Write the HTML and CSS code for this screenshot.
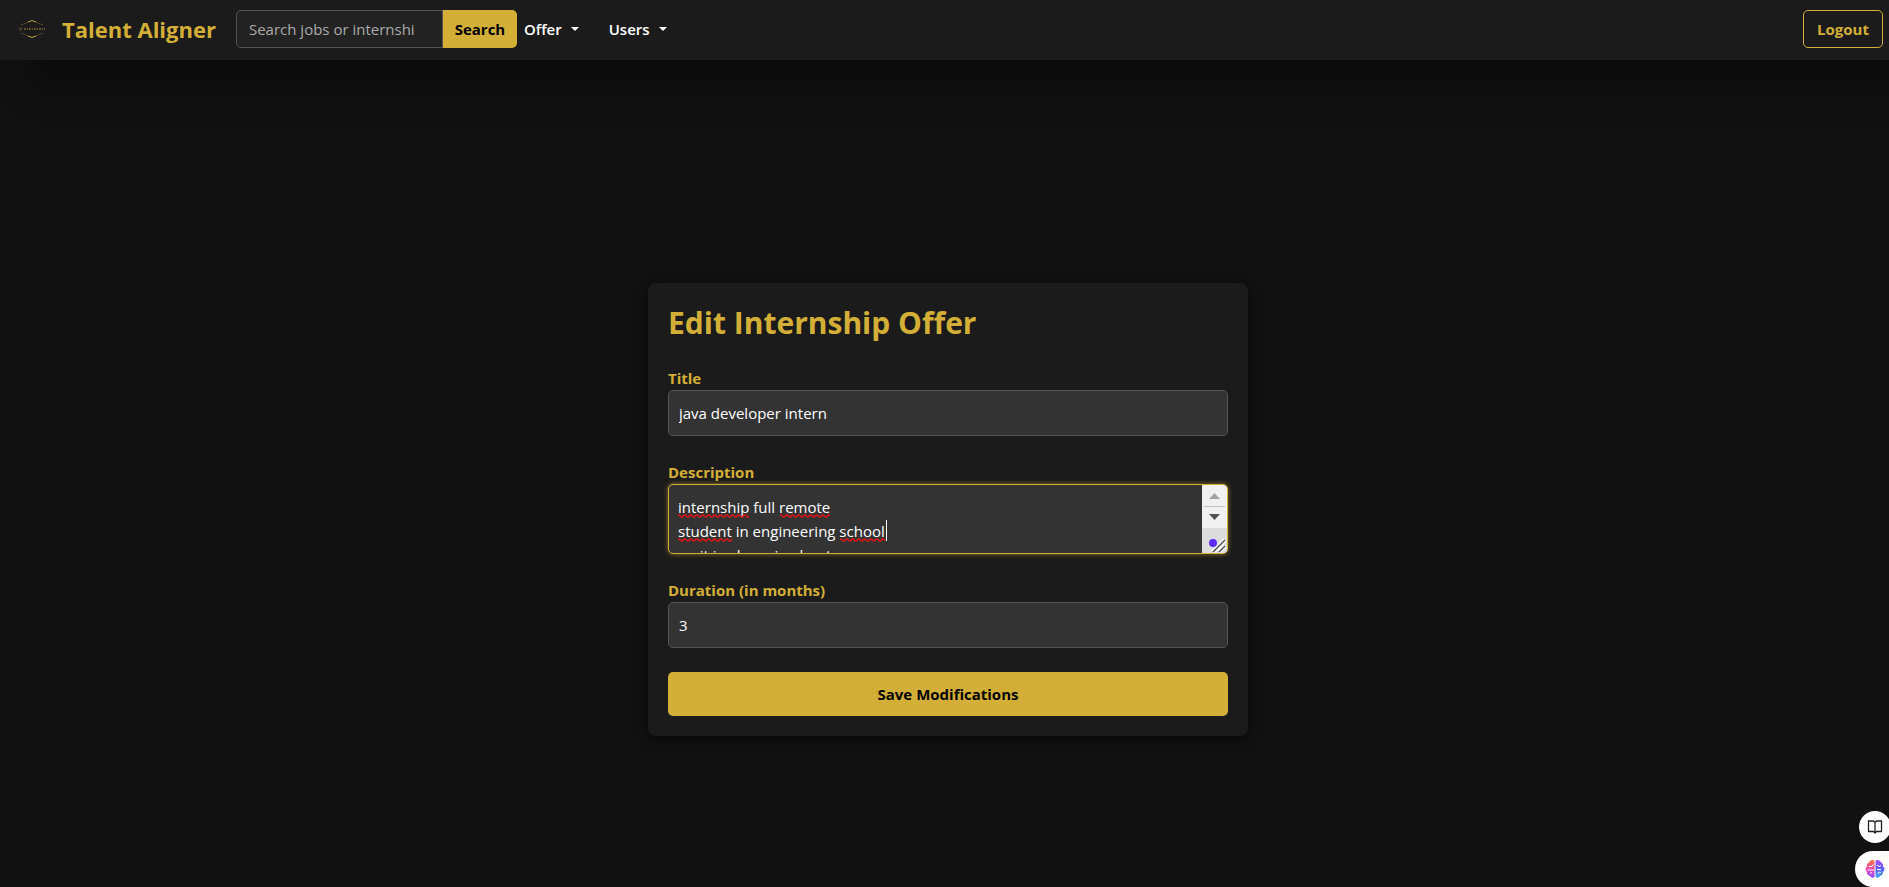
FILE: index.html
```html
<!DOCTYPE html>
<html lang="en">
<head>
<meta charset="utf-8">
<meta name="viewport" content="width=device-width, initial-scale=1">
<title>Talent Aligner</title>
<link rel="stylesheet" href="styles.css">
</head>
<body>
<header class="navbar">
  <a class="brand" href="#">
    <svg class="brand-logo" viewBox="0 0 32 24" aria-hidden="true">
      <path d="M5 8 16 3.500 27 8M5 16l11 4.500L27 16" fill="none" stroke="#5d5225" stroke-width="0.8"/>
      <path d="M12 5l4-1.500L20 5M12 19l4 1.500 4-1.500" fill="none" stroke="#b39b4a" stroke-width="1"/>
      <path d="M3 10.500h3v3h-3z" fill="#4a3d24"/>
      <path d="M8 12h21" stroke="#65552f" stroke-width="2" stroke-dasharray="2 1 1 1" fill="none"/>
    </svg>
    <span>Talent Aligner</span>
  </a>
  <form class="search" role="search">
    <input class="search-input" type="search" placeholder="Search jobs or internshi" aria-label="Search jobs or internships">
    <button class="search-button" type="button">Search</button>
  </form>
  <nav class="menu">
    <button class="menu-item" type="button">Offer</button>
    <button class="menu-item" type="button">Users</button>
  </nav>
  <button class="logout" type="button">Logout</button>
</header>
<main class="page">
  <form class="card">
    <h1 class="card-title">Edit Internship Offer</h1>
    <div class="field">
      <label for="title">Title</label>
      <input class="control" id="title" type="text" value="java developer intern">
    </div>
    <div class="field">
      <label for="description">Description</label>
      <div class="editor">
        <textarea class="editor-text" id="description" spellcheck="false">internship full remote
student in engineering school
recit in charming boat</textarea>
        <svg class="editor-marks" width="220" height="68" aria-hidden="true">
          <defs>
            <pattern id="wave" width="6" height="4" patternUnits="userSpaceOnUse" patternTransform="translate(0 1)">
              <path d="M0 3 1.500 3 3 1 4.500 1 6 3" fill="none" stroke="#e01414" stroke-width="1.500"/>
            </pattern>
          </defs>
          <path d="M9 29h71v4h-71zM111 29h50v4h-50zM9 53h54v4h-54zM171 53h45v4h-45z" fill="url(#wave)"/>
          <path d="M217.500 35v21" stroke="#fff"/>
        </svg>
        <svg class="scrollbar" viewBox="0 0 25 68" aria-hidden="true">
          <path d="M0 0h25v68H0z" fill="#f1f1f1"/>
          <path d="M0 43h25v25H0z" fill="#dcdcdc"/>
          <path d="M2 21.500h21" stroke="#c1c1c1"/>
          <path d="M7 14 12.500 8 18 14z" fill="#a3a3a3"/>
          <path d="M7 29h11l-5.500 6z" fill="#505050"/>
          <path d="M11 67 23 55M17 67l6-6" stroke="#fff" stroke-width="4"/>
          <path d="M11 67 23 55M17 67l6-6" stroke="#505050" stroke-width="1.500"/>
          <circle cx="11" cy="58" r="4" fill="#6029ff"/>
        </svg>
      </div>
    </div>
    <div class="field">
      <label for="duration">Duration (in months)</label>
      <input class="control" id="duration" type="text" inputmode="numeric" value="3">
    </div>
    <button class="save" type="button">Save Modifications</button>
  </form>
</main>
<aside class="dock">
  <button class="dock-button" type="button" aria-label="Reader">
    <svg width="16" height="16" viewBox="0 0 16 16" fill="none" stroke="#222" stroke-width="1.300" stroke-linejoin="round">
      <path d="M8 3.500 6.500 2H1.500v10.500H6.500L8 14l1.500-1.500h5V2h-5zM8 3.500V14"/>
    </svg>
  </button>
  <button class="dock-button dock-large" type="button" aria-label="Assistant">
    <svg width="20" height="20" viewBox="0 0 20 20">
      <defs>
        <linearGradient id="left" x1="0" y1="0" x2="0" y2="1"><stop offset="0" stop-color="#ff7a3d"/><stop offset=".5" stop-color="#f04bb5"/><stop offset="1" stop-color="#8b45ff"/></linearGradient>
        <linearGradient id="right" x1="0" y1="0" x2="0" y2="1"><stop offset="0" stop-color="#b14cff"/><stop offset=".5" stop-color="#5b5cff"/><stop offset="1" stop-color="#3fa8ff"/></linearGradient>
      </defs>
      <path d="M9.500 1.500C7 0 4.500 1.500 4 3.500 2 4 1.500 6 2 7.500 0 9 0 11.500 2 13c0 2 1 3.500 3 4 1 2 3.500 2 4.500 1z" fill="url(#left)"/>
      <path d="M10.500 1.500C13 0 15.500 1.500 16 3.500c2 .5 2.500 2.500 2 4 2 1.500 2 4 0 5.500 0 2-1 3.500-3 4-1 2-3.500 2-4.500 1z" fill="url(#right)"/>
      <path d="M4 7.500h3l1-2M2.500 11H9M5 14.500l2-1M12 6l2 1.500 2-1M12 10.500h4M13 15l1-2 2 .5" fill="none" stroke="#fff" stroke-width="1"/>
    </svg>
  </button>
</aside>
</body>
</html>
```
FILE: styles.css
```css
* { box-sizing: border-box; }

body {
  margin: 0;
  min-height: 100vh;
  display: flex;
  flex-direction: column;
  overflow-x: hidden;
  background: #111;
  color: #fff;
  font: 15px/24px "Segoe UI", "Open Sans", "Noto Sans", sans-serif;
}

button, input, textarea { font: inherit; color: inherit; }
button { cursor: pointer; }

.navbar {
  display: flex;
  align-items: center;
  height: 60px;
  padding: 0 6px 2px 16px;
  background: #1b1b1b;
  box-shadow: 30px 30px 32px rgba(0, 0, 0, 0.35);
}

.brand {
  display: flex;
  align-items: center;
  gap: 14px;
  margin-right: 20px;
  color: #d4af37;
  font-size: 22px;
  font-weight: 700;
  text-decoration: none;
}
.brand-logo { width: 32px; height: 24px; }

.search { display: flex; height: 38px; }
.search-input {
  width: 207px;
  padding: 0 12px;
  border: 1px solid #555;
  border-radius: 5px 0 0 5px;
  background: #222;
  outline: none;
}
.search-input::placeholder { color: #aaa; opacity: 1; }
.search-button {
  width: 74px;
  padding: 0;
  border: 0;
  border-radius: 0 5px 5px 0;
  background: #d4af37;
  color: #000;
  font-weight: 700;
}

.menu { display: flex; gap: 30px; margin-left: 7px; }
.menu-item {
  display: flex;
  align-items: center;
  gap: 9px;
  padding: 0;
  border: 0;
  background: none;
  font-weight: 600;
}
.menu-item::after {
  content: "";
  border: 4px solid transparent;
  border-top-color: #fff;
  border-bottom: 0;
}

.logout {
  width: 80px;
  height: 38px;
  margin-left: auto;
  padding: 0;
  border: 1px solid #d4af37;
  border-radius: 5px;
  background: none;
  color: #d4af37;
  font-weight: 700;
}

.page {
  flex: 1;
  display: flex;
  align-items: center;
  justify-content: center;
  padding: 72px 0 0 7px;
}
.card {
  display: flex;
  flex-direction: column;
  gap: 24px;
  width: 100%;
  max-width: 600px;
  padding: 20px;
  border-radius: 8px;
  background: #1b1b1b;
  box-shadow: 0 4px 12px rgba(0, 0, 0, 0.5);
}
.card-title {
  margin: 0;
  color: #d4af37;
  font-size: 30px;
  line-height: 39px;
  font-weight: 700;
}
.field { display: flex; flex-direction: column; }
.field label { color: #d4af37; font-weight: 700; }
.control {
  width: 100%;
  height: 46px;
  padding: 0 10px;
  border: 1px solid #555;
  border-radius: 5px;
  background: #333;
}
.editor {
  position: relative;
  display: flex;
  height: 70px;
  border: 1px solid #d4af37;
  border-radius: 5px;
  background: #333;
  box-shadow: 0 0 5px rgba(212, 175, 55, 0.6);
  overflow: hidden;
}
.editor-text {
  flex: 1;
  padding: 10px 9px;
  border: 0;
  outline: none;
  background: none;
  resize: none;
  overflow: hidden;
}
.editor-marks { position: absolute; left: 0; top: 0; pointer-events: none; }
.scrollbar { width: 25px; height: 68px; }
.save {
  height: 44px;
  border: 0;
  border-radius: 5px;
  background: #d4af37;
  color: #000;
  font-weight: 700;
}

.dock {
  position: fixed;
  right: 0;
  bottom: 0;
  display: flex;
  flex-direction: column;
  align-items: flex-end;
  gap: 8px;
}
.dock-button {
  display: flex;
  align-items: center;
  width: 32px;
  height: 32px;
  margin-right: -2px;
  padding: 0 0 0 8px;
  border: 0;
  border-radius: 16px;
  background: #fff;
}
.dock-large {
  width: 34px;
  height: 36px;
  margin-right: 0;
  padding-left: 10px;
  border-radius: 18px 0 0 18px;
}
```
